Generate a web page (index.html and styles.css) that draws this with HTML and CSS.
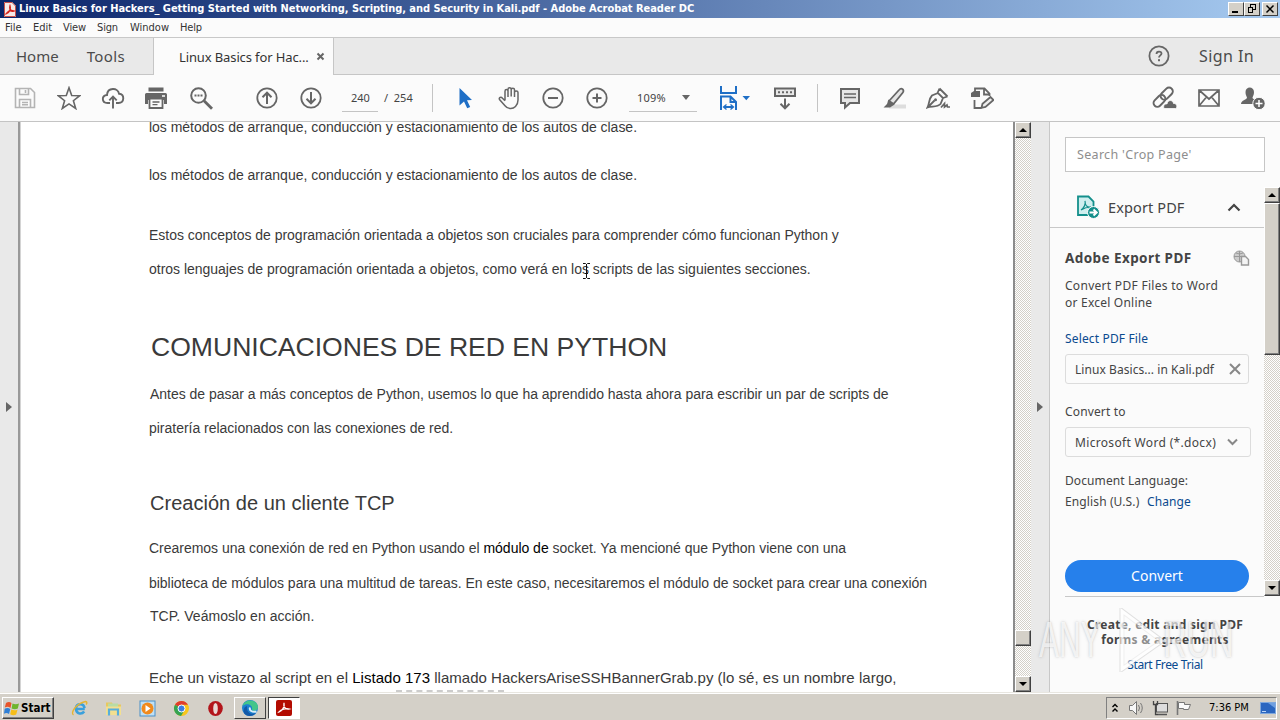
FILE: index.html
```html
<!DOCTYPE html>
<html lang="es">
<head>
<meta charset="utf-8">
<title>Adobe Acrobat Reader DC</title>
<link rel="stylesheet" href="styles.css">
</head>
<body>
<div class="screen">
  <header class="titlebar">
    <svg class="app-icon" width="12" height="15" viewBox="0 0 12 15"><path d="M0 0h8l4 4v11H0z" fill="#f6e9e8"/><path d="M.500 .500H8l3.500 3.500v10.500H.500z" fill="none" stroke="#c9504a"/><path d="M2.500 11.500c3-1 4.500-4.500 3.500-7.500-1 3 1 6 3.700 5-2.700-1-5.700 .500-7.200 2.500z" fill="none" stroke="#d5231c" stroke-width="1.500"/></svg>
    <span class="t title">Linux Basics for Hackers_ Getting Started with Networking, Scripting, and Security in Kali.pdf - Adobe Acrobat Reader DC</span>
    <div class="winbtns">
      <span class="wbtn"><svg width="14" height="12"><path d="M3 9h6" stroke="#000" stroke-width="2"/></svg></span>
      <span class="wbtn"><svg width="14" height="12"><path d="M5 1.500h6M5.500 1v3M10.500 1v6M8 6.500h3M3 4.500h5M3.500 4v6M7.500 4v6M3 9.500h5" stroke="#000" fill="none"/></svg></span>
      <span class="wbtn close"><svg width="14" height="12"><path d="M3.500 2.500l7 7M10.500 2.500l-7 7" stroke="#000" stroke-width="1.500"/></svg></span>
    </div>
  </header>

  <nav class="menubar">
    <span class="t m1">File</span><span class="t m2">Edit</span><span class="t m3">View</span><span class="t m4">Sign</span><span class="t m5">Window</span><span class="t m6">Help</span>
  </nav>

  <div class="tabs">
    <div class="tabs-left"><span class="t home">Home</span><span class="t tools">Tools</span></div>
    <div class="tab-active"><span class="t tabname">Linux Basics for Hac...</span><svg width="9" height="9"><path d="M1.500 1.500l6 6M7.500 1.500l-6 6" stroke="#666" stroke-width="2"/></svg></div>
    <div class="tabs-right">
      <svg width="22" height="22" viewBox="0 0 22 22"><circle cx="11" cy="11" r="9.600" fill="none" stroke="#666" stroke-width="1.800"/><path d="M8.500 9c0-3.200 5-3 5-.5 0 1.800-2.500 1.900-2.500 4" fill="none" stroke="#666" stroke-width="1.800"/><rect x="10" y="14.200" width="2" height="2" fill="#666"/></svg>
      <span class="t signin">Sign In</span>
    </div>
  </div>

  <div class="toolbar">
    <svg class="ic" style="--x:13px" viewBox="0 0 24 24"><path d="M2.500 2.500h15l4 4v15h-19zM6.500 2.500v6h9v-6M6.500 21.500v-8h11v8M12.500 4v3M9 16.500h6M9 18.700h6" fill="none" stroke="#b4b4b4" stroke-width="1.600"/></svg>
    <svg class="ic" style="--x:57px" viewBox="0 0 24 24"><path d="M12 1.800l2.700 7.700 8.100.2-6.400 5 2.300 7.800L12 17.900l-6.700 4.600 2.300-7.800-6.400-5 8.100-.2z" fill="none" stroke="#666" stroke-width="1.600"/></svg>
    <svg class="ic" style="--x:101px" viewBox="0 0 24 24"><path d="M9 17H6.500C.3 17 .4 9 6 9c.5-8 11.200-7.500 12-1.300 6 .5 5.500 9.300-.5 9.300H15M12 22.500V11M8.300 14.400L12 10.700l3.700 3.700" fill="none" stroke="#666" stroke-width="1.900"/></svg>
    <svg class="ic" style="--x:144px" viewBox="0 0 24 24"><path d="M4.500 1.500h15v4h-15zM1 8.500Q1 7 2.500 7h19Q23 7 23 8.500V18h-3v-4H4v4H1z" fill="#666"/><path d="M5.500 12.500h13v9.500h-13z" fill="#fbfbfb" stroke="#666" stroke-width="1.800"/><path d="M8.500 16h7M8.500 18.700h5" stroke="#666" stroke-width="1.300"/><path d="M18 10h3" stroke="#fff" stroke-width="1.500"/></svg>
    <svg class="ic" style="--x:189px" viewBox="0 0 24 24"><circle cx="9.500" cy="9.500" r="7.300" fill="none" stroke="#666" stroke-width="2"/><path d="M15 14.700l8 8" stroke="#666" stroke-width="2.800"/><path d="M5.500 9.500h2M8.500 9.500h2M11.500 9.500h2" stroke="#666" stroke-width="2"/></svg>
    <svg class="ic" style="--x:255px" viewBox="0 0 24 24"><circle cx="12" cy="12" r="9.700" fill="none" stroke="#666" stroke-width="1.800"/><path d="M12 18V7M7.500 11.200L12 6.700l4.500 4.500" fill="none" stroke="#666" stroke-width="2"/></svg>
    <svg class="ic" style="--x:299px" viewBox="0 0 24 24"><circle cx="12" cy="12" r="9.700" fill="none" stroke="#666" stroke-width="1.800"/><path d="M12 6v11M7.500 12.800l4.500 4.500 4.500-4.500" fill="none" stroke="#666" stroke-width="2"/></svg>
    <div class="pagebox"><span class="t pg">240</span></div><span class="t pgtot">/ 254</span>
    <i class="sep" style="--x:432px"></i>
    <svg class="ic" style="--x:453px" viewBox="0 0 24 24"><path d="M6.500 2l12.500 12-5 .3 3.200 6.600-3 1.300-3.200-6.700-4.500 4z" fill="#1f6fc6"/></svg>
    <svg class="ic" style="--x:497px" viewBox="0 0 24 24"><path d="M7 14.500V5.200c0-2.200 3-2.200 3 0V11M10 10.500V3.300c0-2.200 3.200-2.200 3.200 0v7.200M13.200 10.500V3.800c0-2.200 3.300-2.200 3.300 0V11M16.500 11V6.500c0-2 3.500-2 3.500 0V14c0 3-1 5-2.500 6.500-3 3-8 2.500-10.500-.8L1.500 13.500c-1-2 1.500-3 3-1.300l2.500 2.500" transform="translate(1 0)" fill="none" stroke="#666" stroke-width="1.500"/></svg>
    <svg class="ic" style="--x:541px" viewBox="0 0 24 24"><circle cx="12" cy="12" r="9.700" fill="none" stroke="#666" stroke-width="1.800"/><path d="M7 12h10" stroke="#666" stroke-width="2"/></svg>
    <svg class="ic" style="--x:585px" viewBox="0 0 24 24"><circle cx="12" cy="12" r="9.700" fill="none" stroke="#666" stroke-width="1.800"/><path d="M7.500 12h9M12 7.500v9" stroke="#666" stroke-width="2"/></svg>
    <div class="zoombox"><span class="t zm">109%</span><svg width="8" height="5"><path d="M0 0h8L4 5z" fill="#666"/></svg></div>
    <svg class="ic wide" style="--x:718px" viewBox="0 0 34 26"><path d="M3 1v7h15V1M3 25V11.500h9.500l5.500 5.500v8M12.500 11.500V17H18M6 22h9" fill="none" stroke="#1f6fc6" stroke-width="2"/><path d="M8.500 19.500L5.500 22l3 2.500M12.500 19.500l3 2.500-3 2.500" fill="none" stroke="#1f6fc6" stroke-width="1.300"/><path d="M24.500 11h7.500L28.300 15.200z" fill="#1f6fc6"/></svg>
    <svg class="ic" style="--x:773px" viewBox="0 0 24 24"><path d="M2 2.500h20v7.500H2z" fill="#e8e8e8" stroke="#666" stroke-width="2"/><path d="M5 6.300h2M9 6.300h2M13 6.300h2M17 6.300h2" stroke="#666" stroke-width="2"/><path d="M12 12.500V22M7.500 17.800l4.500 4.500 4.500-4.500" fill="none" stroke="#666" stroke-width="2"/></svg>
    <i class="sep" style="--x:817px"></i>
    <svg class="ic" style="--x:838px" viewBox="0 0 24 24"><path d="M3 3h18v14h-9l-5 4.500V17H3z" fill="#e6e6e6" stroke="#666" stroke-width="2"/><path d="M6 8h12M6 11.500h12" stroke="#666" stroke-width="1.500"/></svg>
    <svg class="ic" style="--x:882px" viewBox="0 0 24 24"><path d="M9 18.500h15v4H7z" fill="#ddd"/><path d="M7 15L17 4c2.500-3 6 0 3.700 2.800L11.500 18z" fill="#e4e4e4" stroke="#666" stroke-width="1.800"/><path d="M6.500 13.500l6 5L8 21.500H1.500L5 18z" fill="#666"/></svg>
    <svg class="ic" style="--x:926px" viewBox="0 0 24 24"><path d="M13.500 2.500l8 8M13.500 2.500L11.500 7M21.500 10.500L17 12M1.500 21.500C3.500 18 2.500 13 6 9.500L12 7l5 5-2.500 6c-3 3.500-9 2-13 3.500zM1.500 21.500l7-7" fill="none" stroke="#666" stroke-width="1.800"/><circle cx="9.500" cy="13.800" r="1.500" fill="#666"/><path d="M15 21.500l3.500-4v3.500l2.500-2 .5 2h3" fill="none" stroke="#666" stroke-width="1.700"/></svg>
    <svg class="ic" style="--x:970px" viewBox="0 0 24 24"><path d="M5 5V2.500h9.500l5 5V10M14 2.500v6h5M4.500 14v8h7" fill="none" stroke="#666" stroke-width="1.800"/><path d="M1 7l3-2h6v6H1z" fill="#666"/><path d="M11.500 21.800l1-4L20.500 11l3 3-8 7z" fill="#eee" stroke="#666" stroke-width="1.800"/></svg>
    <svg class="ic big" style="--x:1152px" viewBox="0 0 26 24"><g transform="rotate(-45 11 11)" fill="none" stroke="#666" stroke-width="2"><rect x="-1" y="7.500" width="13.500" height="7.500" rx="3.700"/><rect x="9" y="7.500" width="14" height="7.500" rx="3.700"/></g><path d="M12 22.500c-1.500-4 2-5 3-4.500 1-5 6-4 6.500-.5 4-.5 4 5 2 5z" fill="#666" stroke="#fbfbfb" stroke-width=".8"/></svg>
    <svg class="ic" style="--x:1197px" viewBox="0 0 24 24"><path d="M2 4h20v16H2zM2 4l10 9L22 4M2 20l7.500-9M22 20l-7.500-9" fill="none" stroke="#666" stroke-width="1.700"/></svg>
    <svg class="ic" style="--x:1241px" viewBox="0 0 24 24"><path d="M4.500 6c0-6 8.500-6 8.500 0 0 3-1 4-1.500 5.500 0 2 4 2 5 4V18H0c0-4 6-4 6-6.500C5.500 10 4.500 9 4.500 6z" fill="#666"/><circle cx="18" cy="17.500" r="6.200" fill="#666" stroke="#fbfbfb"/><path d="M14.500 17.500h7M18 14v7" stroke="#fff" stroke-width="1.500"/></svg>
  </div>

  <main class="main">
    <div class="strip left"><i class="tri"></i></div>
    <article class="page">
      <p class="ln l1">los métodos de arranque, conducción y estacionamiento de los autos de clase.</p>
      <p class="ln l2">los métodos de arranque, conducción y estacionamiento de los autos de clase.</p>
      <p class="ln l3">Estos conceptos de programación orientada a objetos son cruciales para comprender cómo funcionan Python y</p>
      <p class="ln l4">otros lenguajes de programación orientada a objetos, como verá en los scripts de las siguientes secciones.<svg class="cursor" width="9" height="16"><path d="M1 .500h2.500l1 1 1-1H8M4.500 1v14M1 15.500h2.500l1-1 1 1H8M3 10.500h3" fill="none" stroke="#111"/></svg></p>
      <h1 class="ln l5">COMUNICACIONES DE RED EN PYTHON</h1>
      <p class="ln l6">Antes de pasar a más conceptos de Python, usemos lo que ha aprendido hasta ahora para escribir un par de scripts de</p>
      <p class="ln l7">piratería relacionados con las conexiones de red.</p>
      <h2 class="ln l8">Creación de un cliente TCP</h2>
      <p class="ln l9">Crearemos una conexión de red en Python usando el <b>módulo de</b> socket. Ya mencioné que Python viene con una</p>
      <p class="ln l10">biblioteca de módulos para una multitud de tareas. En este caso, necesitaremos el módulo de socket para crear una conexión</p>
      <p class="ln l11">TCP. Veámoslo en acción.</p>
      <p class="ln l12">Eche un vistazo al script en el <b>Listado 173</b> llamado HackersAriseSSHBannerGrab.py (lo sé, es un nombre largo,</p>
      <div class="nextline"></div>
    </article>
    <div class="vscroll doc-scroll"><span class="sbtn up"></span><span class="thumb"></span><span class="sbtn down"></span></div>
    <div class="strip right"><i class="tri"></i></div>
    <aside class="panel">
      <div class="search"><span class="t srch">Search 'Crop Page'</span></div>
      <div class="panel-mid">
        <div class="panel-body">
          <div class="export-head">
            <svg width="24" height="24" viewBox="0 0 24 24"><path d="M2 1.500h10.500l5 5V20H2z" fill="#cfeeee" stroke="#148f8b" stroke-width="1.800"/><path d="M5 15c3-2 5-6 4-9 0 4 2 7 6 6-4 0-7 1-10 3z" fill="none" stroke="#148f8b" stroke-width="1.200"/><circle cx="17.500" cy="17.500" r="6" fill="#148f8b" stroke="#fbfbfb"/><path d="M13.500 17.500h6M17.500 14.500l3.200 3-3.200 3" fill="none" stroke="#fff" stroke-width="2"/></svg>
            <span class="t exp">Export PDF</span>
            <svg class="chev" width="14" height="9"><path d="M1.500 7.500L7 2l5.500 5.500" fill="none" stroke="#444" stroke-width="2.200"/></svg>
          </div>
          <div class="export-body">
            <div class="row-head"><span class="t aep">Adobe Export PDF</span>
              <svg width="17" height="16"><circle cx="6.500" cy="6.500" r="5.500" fill="#ccc" stroke="#999"/><path d="M1 6.500h11M6.500 1v11M3 3q3.500 2 7 0" fill="none" stroke="#999"/><path d="M8.500 6.500h4l3 3v5.500h-7z" fill="#f4f4f4" stroke="#999" stroke-width="1.400"/></svg></div>
            <p class="desc"><span class="t ds1">Convert PDF Files to Word</span><br><span class="t ds2">or Excel Online</span></p>
            <a class="link"><span class="t sel">Select PDF File</span></a>
            <div class="box file"><span class="t fl">Linux Basics... in Kali.pdf</span><svg width="12" height="12"><path d="M1 1l10 10M11 1L1 11" stroke="#888" stroke-width="2"/></svg></div>
            <div class="lbl"><span class="t cvt">Convert to</span></div>
            <div class="box fmt"><span class="t mw">Microsoft Word (*.docx)</span><svg width="11" height="8"><path d="M1 1.500l4.500 4.500L10 1.500" fill="none" stroke="#888" stroke-width="2"/></svg></div>
            <div class="lang"><span class="t dl">Document Language:</span></div>
            <div class="lang2"><span class="t en">English (U.S.)</span><a class="t chg">Change</a></div>
            <button class="convert"><span class="t cv">Convert</span></button>
          </div>
        </div>
        <div class="vscroll side-scroll"><span class="sbtn up"></span><span class="thumb"></span><span class="sbtn down"></span></div>
      </div>
      <footer class="promo"><b class="t pr1">Create, edit and sign PDF</b><b class="t pr2">forms &amp; agreements</b><a class="t pr3">Start Free Trial</a></footer>
    </aside>
  </main>

  <footer class="taskbar">
    <div class="start"><svg width="16" height="16" viewBox="0 0 16 16"><path d="M2 3q3-2 5.500 0L6.500 8Q4 6 .8 7.500z" fill="#e8542a"/><path d="M8.500 3.500q3 1.500 6.500 0l-1.200 5q-3 1.500-6.200 0z" fill="#6fb52c"/><path d="M.7 8.700q3-1.700 5.600.3L5 14q-2.500-1.800-5-.3z" fill="#2f7fd6"/><path d="M7.300 9.500q3 1.500 6.200.2l-1.300 4.800q-3 1.500-6-.3z" fill="#f6bd18"/></svg><span class="t st">Start</span></div>
    <div class="quick">
      <svg width="17" height="17" viewBox="0 0 17 17"><path d="M13.800 9H5c.3 5.500 6 5.500 8.200 2.500M5 8c.5-5 8-5 8.500.2" fill="none" stroke="#3aa0dc" stroke-width="2.600"/><path d="M2.500 15C-1 13 5 3.500 14.500 1.500c2 0 1.500 2 .5 3" fill="none" stroke="#e6b432" stroke-width="1.400"/></svg>
      <svg width="17" height="17" viewBox="0 0 17 17"><path d="M1 2.500h6l1 2h8V15H1z" fill="#e8c860"/><path d="M3 3.500h10v4H3z" fill="#b9dca4"/><path d="M1 6.500h15V15H1z" fill="#f3df90"/><path d="M4 15.500V9.500h9v6" fill="none" stroke="#58aedb" stroke-width="2.200"/></svg>
      <svg width="17" height="17" viewBox="0 0 17 17"><rect x="1" y="1" width="15" height="15" fill="#bfe0f5" stroke="#4a90c8"/><circle cx="8.500" cy="8.500" r="6" fill="#f08a1d"/><path d="M6.500 5l5 3.500-5 3.500z" fill="#fff"/></svg>
      <svg width="17" height="17" viewBox="0 0 17 17"><circle cx="8.500" cy="8.500" r="7.500" fill="#f7c61d"/><path d="M8.500 8.500L2 4.700A7.500 7.500 0 0 1 15 4.800H8.500z" fill="#df3c2e"/><path d="M8.500 8.500L2 4.700A7.500 7.500 0 0 0 8 16l3.500-6z" fill="#35a352"/><circle cx="8.500" cy="8.500" r="3.500" fill="#3c7de0" stroke="#fff"/></svg>
      <svg width="17" height="17" viewBox="0 0 17 17"><ellipse cx="8.500" cy="8.500" rx="7.300" ry="7.500" fill="#b3151b"/><ellipse cx="8.500" cy="8.500" rx="2.300" ry="5.600" fill="#e9d8d5"/></svg>
    </div>
    <div class="task raised"><svg width="18" height="18" viewBox="0 0 18 18"><circle cx="9" cy="9" r="8" fill="#1b7fd0"/><path d="M1.500 7C4-1 17 0 17 8.500c-.5 4-6 4-6 2C12 6 6 3.500 1.500 7z" fill="#43c58a"/><path d="M6 9c0 5 5 7 9 5-3 4-10 4-12 0-1-3 0-6 3-7z" fill="#1259a8"/><path d="M9 8.500c-1 3 2 5 6.500 4" fill="none" stroke="#d9edf7" stroke-width="2"/></svg></div>
    <div class="task pressed"><svg width="16" height="16" viewBox="0 0 16 16"><rect width="16" height="16" rx="2" fill="#b30b00"/><path d="M3 12c3-1 6-5 5-9-1 4 2 7 5.500 6C10 8 5 9.500 3 12z" fill="none" stroke="#fff" stroke-width="1.300"/></svg></div>
    <div class="tray">
      <svg width="8" height="12"><path d="M1.500 5L4 2.500 6.500 5M1.500 9.500L4 7l2.500 2.500" fill="none" stroke="#000" stroke-width="1.400"/></svg>
      <svg class="spk" width="17" height="16"><path d="M1.500 5.500h3l4-4v13l-4-4h-3z" fill="#f7f7f7" stroke="#777"/><path d="M10.500 5q2 3 0 6M12.500 3q3.500 5 0 10" fill="none" stroke="#777"/></svg>
      <svg class="net" width="17" height="16"><rect x="4.500" y="3.500" width="11" height="8.500" fill="#ddd" stroke="#555"/><path d="M6 14.500h9" stroke="#555" stroke-width="1.500"/><path d="M1.500 1v3.500h4V1M3.500 5v9.500H6" fill="none" stroke="#444" stroke-width="1.300"/></svg>
      <svg class="flg" width="17" height="16"><path d="M2.500 1v14" stroke="#777" stroke-width="1.600"/><path d="M3.500 2.500h6v2h6l-2 5H8.500v-1h-5z" fill="#fafafa" stroke="#777"/></svg>
      <span class="t clk">7:36 PM</span>
      <svg class="desk" width="16" height="13"><rect x=".500" y=".500" width="15" height="11" fill="#2b66c0" stroke="#7fa8dd"/><path d="M8 1h7v5z" fill="#6f9fe0"/><path d="M2 9.500h4" stroke="#bcd5f5"/></svg>
    </div>
  </footer>

  <div class="watermark"><span class="wm wa">ANY</span><svg width="48" height="64" viewBox="0 0 48 64"><path d="M3 3v58l40-28z" fill="none" stroke="#aaa" stroke-opacity=".4" stroke-width="5"/><path d="M3 3v58l40-28z" fill="#fff" fill-opacity=".5" stroke="#fff" stroke-width="3"/></svg><span class="wm wr">RUN</span></div>
</div>
</body>
</html>
```
FILE: styles.css
```css
*{box-sizing:border-box}
body{margin:0;overflow:hidden;font-family:"Noto Sans","Open Sans",sans-serif;color:#444}
svg{display:block;flex:none}
p,h1,h2{margin:0;font-weight:400}
.t{display:inline-block;white-space:pre}
.screen{position:relative;width:1280px;height:720px;display:flex;flex-direction:column;background:#fbfbfb;overflow:hidden}

/* window chrome */
.titlebar{height:18px;display:flex;align-items:center;padding:0 2px 0 4px;background:linear-gradient(90deg,#0a246a,#a6caf0)}
.title{margin-left:3px;font:bold 11px/16px "DejaVu Sans Condensed","DejaVu Sans",sans-serif;letter-spacing:-.035px;color:#fff}
.winbtns{display:flex;margin-left:auto}
.wbtn{width:16px;height:14px;background:#d4d0c8;border:1px solid;border-color:#fff #404040 #404040 #fff}
.close{margin-left:2px}
.menubar{height:20px;display:flex;align-items:center;padding-left:5px;border-bottom:1px solid #c8c8c8;font:11px/18px "DejaVu Sans Condensed","DejaVu Sans",sans-serif;color:#333}
.m1{width:28px}
.m2{width:30px;letter-spacing:-.04px}
.m3{width:34px;letter-spacing:-.12px}
.m4{width:33px;letter-spacing:-.15px}
.m5{width:50px}
.m6{letter-spacing:-.15px}
.tabs{height:37px;display:flex;font-size:15px;color:#4b4b4b}
.tabs-left{width:154px;display:flex;align-items:center;padding-left:16px;background:#e9e9e9;border-right:1px solid #c6c6c6;border-bottom:1px solid #c6c6c6}
.tools{margin-left:28px;letter-spacing:.35px}
.tab-active{width:179px;display:flex;align-items:center;padding-left:25px;font-size:13px;color:#333}
.tabname{letter-spacing:-.12px}
.tab-active svg{margin-left:7px}
.tabs-right{flex:1;display:flex;align-items:center;justify-content:flex-end;padding-right:26px;background:#e9e9e9;border-left:1px solid #c6c6c6;border-bottom:1px solid #c6c6c6}
.signin{margin-left:29px;font-size:16px;letter-spacing:.4px}

/* toolbar */
.toolbar{height:47px;display:grid;align-items:center;border-bottom:1px solid #c4c4c4}
.toolbar>*{grid-area:1/1;margin-left:var(--x)}
.ic{width:24px;height:24px}
.ic.wide{width:34px;height:26px}
.ic.big{width:26px}
.sep{width:1px;height:28px;background:#c4c4c4}
.pagebox{--x:342px;width:36px;height:28px;padding:6px 0 0 9px;border-bottom:1px solid #c4c4c4;font-size:11px;line-height:15px}
.pgtot{--x:384px;justify-self:start;padding-bottom:1px;font-size:11px;line-height:15px;word-spacing:2.500px;letter-spacing:.1px}
.zoombox{--x:629px;width:68px;height:28px;display:flex;align-items:center;justify-content:space-between;padding:0 7px 0 8px;border-bottom:1px solid #c4c4c4;font-size:11px;letter-spacing:.2px}

/* document */
.main{height:570px;display:flex}
.strip{background:#e9e9e9;display:flex;align-items:center}
.strip.left{width:21px;border-right:3px solid #a0a0a0;border-right-style:double;border-right-color:#999;border-right:2px solid #999;padding-left:6px;width:20px}
.strip.right{width:19px;border-right:1px solid #c8c8c8;padding-left:6px}
.tri{border:5px solid transparent;border-left:6px solid #666;border-right:0}
.page{width:993px;background:#fff;padding-left:128px;border-left:1px solid #d4d4d4;overflow:hidden;font:14px/20px "Liberation Sans",Arial,sans-serif;letter-spacing:-.02px;color:#3a3a3a;display:flex;flex-direction:column}
.ln{height:20px;white-space:nowrap;flex:none}
.page b{font-weight:400;color:#000}
.l1{margin-top:-5px}.l2{margin-top:28px}.l3{margin-top:40px}.l4{margin-top:14px;position:relative}
.page h1{margin:48px 0 0 2px;font-size:26.600px;height:40px;line-height:40px;letter-spacing:-.03px}
.l6{margin-top:17px;padding-left:1px}.l7{margin-top:14px}
.page h2{margin:50px 0 0 1px;font-size:20px;height:30px;line-height:30px;letter-spacing:.02px}
.l9{margin-top:20px}.l10{margin-top:15px}
.l11{margin-top:13px;padding-left:1px;letter-spacing:.05px}
.l12{margin-top:42px;font-size:15px;letter-spacing:.02px}
.nextline{width:108px;margin:2px 0 0 247px;border-top:2px dashed #ccc}
.cursor{position:absolute;left:433px;top:4px}

/* scrollbars */
.vscroll{display:flex;flex-direction:column;background:repeating-conic-gradient(#d4d0c8 0 25%,#fff 0 50%) 0 0/2px 2px}
.doc-scroll{width:18px;border-left:2px solid #8c8c8c}
.sbtn,.thumb{display:block;width:16px;height:16px;background:#d4d0c8;border:1px solid;border-color:#fff #404040 #404040 #fff;box-shadow:inset -1px -1px #808080;flex:none}
.sbtn::before{content:"";display:block;width:0;margin:5px 0 0 3px;border:4px solid transparent;border-top:0;border-bottom-color:#000}
.sbtn.down{margin-top:auto}
.sbtn.down::before{border-top:4px solid #000;border-bottom:0}
.doc-scroll .thumb{margin-top:492px}

/* tools panel */
.panel{flex:1;display:flex;flex-direction:column;background:#fbfbfb;font-size:12px}
.search{margin:15px 15px 0;height:35px;border:1px solid #c6c6c6;background:#fff;padding-left:11px;line-height:34px;color:#8e8e8e;font-size:12.500px;letter-spacing:.32px}
.panel-mid{height:409px;margin-top:15px;display:flex}
.panel-body{width:214px}
.export-head{height:41px;display:flex;align-items:center;padding-left:26px;border-bottom:1px solid #c8c8c8;font-size:14.500px}
.exp{margin-left:8px;width:77px;letter-spacing:.12px}
.chev{margin-left:42px}
.export-body{margin-left:15px;height:369px;border-bottom:1px solid #c8c8c8;display:flex;flex-direction:column}
.row-head{display:flex;align-items:center;justify-content:space-between;height:20px;margin-top:20px;padding-right:14px;font-weight:700;font-size:13.500px}
.aep{letter-spacing:.42px}
.desc{line-height:17px;margin-top:9px}
.ds1{letter-spacing:.29px}
.ds2{letter-spacing:.22px}
.link,.chg,.pr3{color:#0a4a8f}
.link{margin-top:19px;line-height:17px;letter-spacing:.15px}
.box{height:30px;border:1px solid #dcdcdc;border-radius:3px;display:flex;align-items:center;justify-content:space-between;padding:0 7px 0 9px}
.file{width:184px;margin-top:7px;letter-spacing:.06px}
.lbl{margin-top:19px;line-height:17px;letter-spacing:.15px}
.fmt{width:186px;margin-top:7px;padding-right:12px;letter-spacing:.33px}
.lang{margin-top:15px;line-height:17px;letter-spacing:.1px}
.lang2{margin-top:4px;line-height:17px}
.en{width:74px;letter-spacing:.12px}
.chg{margin-left:8px;letter-spacing:.1px}
.convert{margin:50px 0 0;width:184px;height:32px;border:0;border-radius:16px;background:#2680eb;color:#fff;font:14px/30px "Noto Sans",sans-serif}
.side-scroll{width:16px}
.side-scroll .thumb{height:152px}
.promo{display:flex;flex-direction:column;align-items:center;padding-top:21px;line-height:15px;font-size:12px}
.pr1,.pr2{letter-spacing:.27px}
.pr3{margin-top:10px;letter-spacing:-.38px}

/* taskbar */
.taskbar{height:28px;background:#d4d0c8;border-top:1px solid #e8e6e0;box-shadow:inset 0 1px #fff;display:flex;align-items:center;padding:3px 3px 0 2px}
.start{width:52px;height:22px;display:flex;align-items:center;padding-left:1px;border:1px solid;border-color:#fff #404040 #404040 #fff;box-shadow:inset -1px -1px #808080}
.st{font:bold 11.500px/16px "DejaVu Sans Condensed",sans-serif;color:#000;margin-left:1px}
.quick{display:flex;gap:17px;margin-left:17px}
.task{display:flex;align-items:center;justify-content:center;height:22px;width:32px;border:1px solid}
.raised{margin-left:10px;border-color:#fff #404040 #404040 #fff}
.pressed{margin-left:2px;background:#fff;border-color:#404040 #fff #fff #404040}
.tray{margin-left:auto;width:171px;height:22px;display:flex;align-items:center;padding-left:4px;border:1px solid;border-color:#808080 #fff #fff #808080}
.spk{margin-left:9px}.net{margin-left:7px}.flg{margin-left:6px}
.clk{width:40px;margin-left:17px;font:11px/16px "DejaVu Sans Condensed",sans-serif;color:#000}
.desk{margin-left:11px}

/* recording watermark over the page */
.watermark{position:absolute;left:1039px;top:608px;width:200px;height:64px;display:flex;align-items:center;opacity:.8}
.wm{font:400 50px/60px "Liberation Sans",sans-serif;color:rgba(255,255,255,.8);text-shadow:0 0 3px rgba(110,110,110,.5);transform-origin:0 50%}
.wa{width:80px;transform:scaleX(.6)}
.wr{margin-left:-4px;transform:scaleX(.65)}
```
